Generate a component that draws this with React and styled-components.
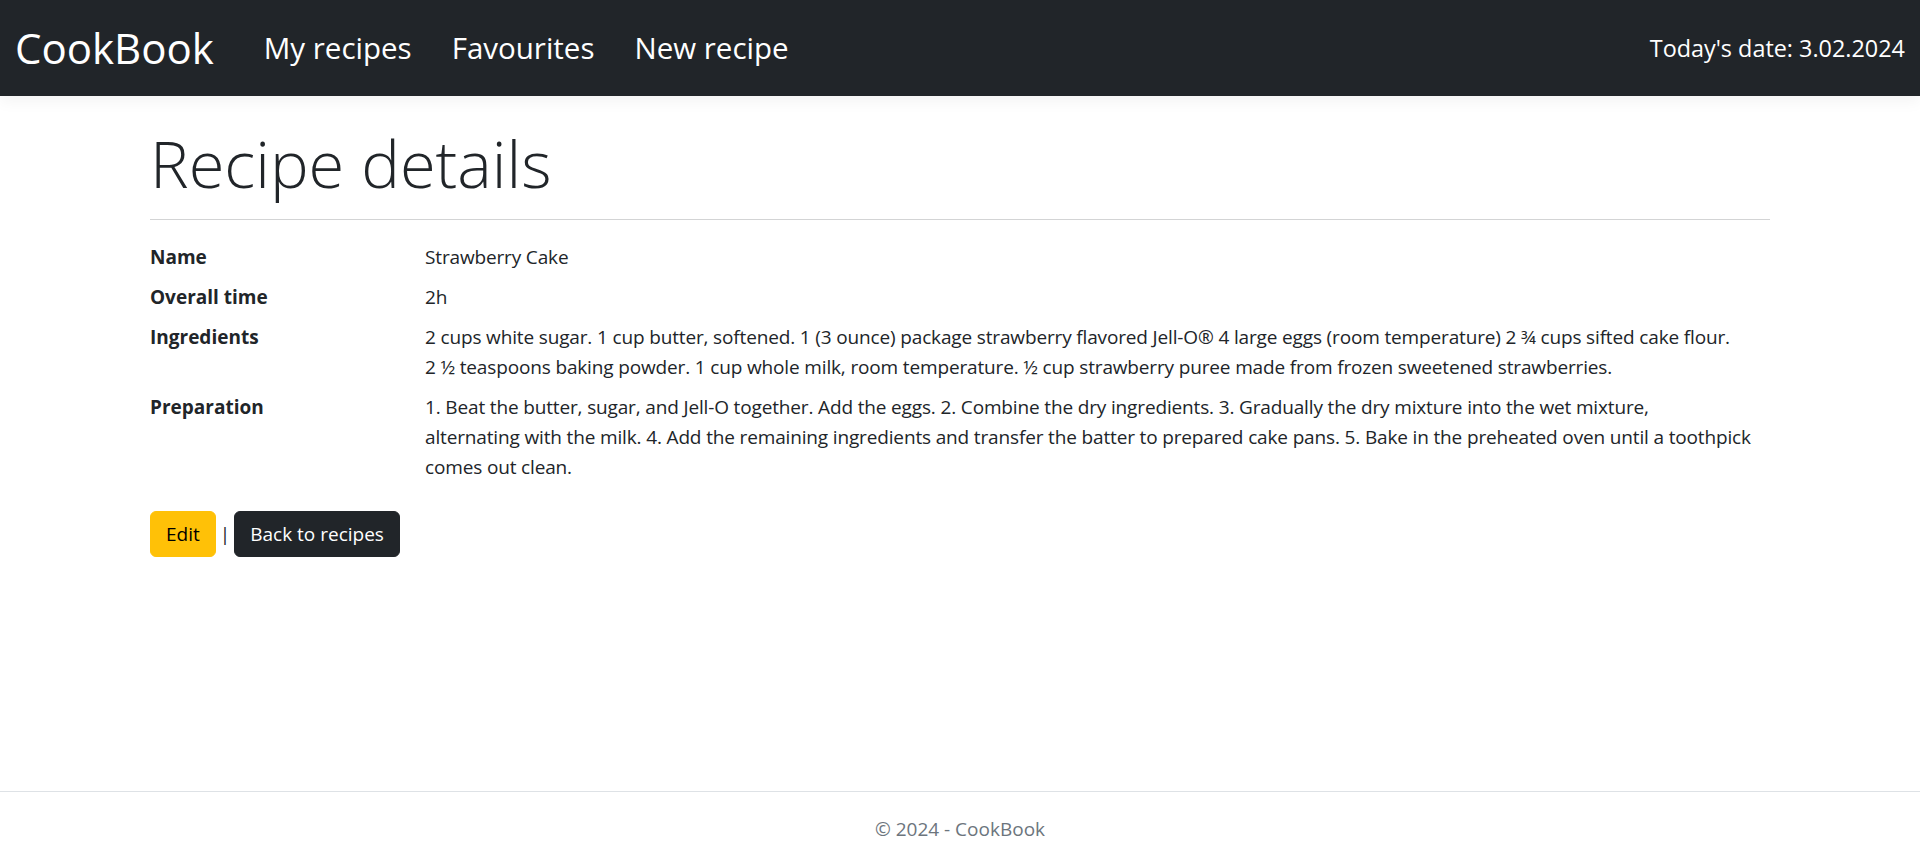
import styled, { createGlobalStyle } from "styled-components";

const GlobalStyle = createGlobalStyle`
    html, body {
        margin: 0;
        padding: 0;
    }
    body {
        font-family: "Segoe UI", "Open Sans", "Noto Sans", sans-serif;
        font-size: 19px;
        line-height: 30px;
        color: #212529;
        background: #fff;
    }
    * {
        box-sizing: border-box;
    }
`;

const Page = styled.div`
    min-height: 100vh;
    display: flex;
    flex-direction: column;
`;

/* navbar */

const Navbar = styled.header`
    height: 96px;
    flex-shrink: 0;
    background: #212529;
    display: flex;
    align-items: center;
    justify-content: space-between;
    padding: 0 15px;
    box-shadow: 0 5px 15px rgba(0, 0, 0, 0.05);
`;

const NavLeft = styled.nav`
    display: flex;
    align-items: center;
    gap: 40px;
`;

const Brand = styled.a`
    color: #fff;
    font-size: 42px;
    line-height: 1.2;
    text-decoration: none;
    margin-right: 10px;
`;

const NavLink = styled.a`
    color: #fff;
    font-size: 29.5px;
    line-height: 1.2;
    text-decoration: none;
`;

const Today = styled.span`
    color: #fff;
    font-size: 23.4px;
`;

/* content */

const Main = styled.main`
    flex: 1;
    width: 1650px;
    margin: 0 auto;
    padding: 25px 15px 0;
`;

const Heading = styled.h1`
    margin: 0;
    font-size: 65px;
    font-weight: 300;
    line-height: 84px;
`;

const Rule = styled.hr`
    margin: 14px 0 22px;
    border: 0;
    border-top: 1px solid #d3d4d5;
`;

const DetailList = styled.dl`
    display: grid;
    grid-template-columns: 275px 1fr;
    margin: 0 0 19px;
`;

const Term = styled.dt`
    font-weight: 700;
    margin-bottom: 10px;
`;

const Desc = styled.dd`
    margin: 0 0 10px;
    letter-spacing: -0.15px;
    white-space: pre-line;
`;

const Actions = styled.div`
    display: flex;
    align-items: center;
    gap: 4px;
`;

const Button = styled.a`
    display: inline-block;
    padding: 7px 15px;
    border: 1px solid ${p => p.$bg};
    border-radius: 6px;
    background: ${p => p.$bg};
    color: ${p => p.$color};
    text-decoration: none;
    line-height: 30px;
`;

const Divider = styled.span`
    color: #212529;
`;

/* footer */

const Footer = styled.footer`
    flex-shrink: 0;
    border-top: 1px solid #dee2e6;
    line-height: 74px;
    text-align: center;
    color: #6c757d;
`;

const details = [
    { label: "Name", value: "Strawberry Cake" },
    { label: "Overall time", value: "2h" },
    {
        label: "Ingredients",
        value: "2 cups white sugar. 1 cup butter, softened. 1 (3 ounce) package strawberry flavored Jell-O® 4 large eggs (room temperature) 2 ¾ cups sifted cake flour.\n2 ½ teaspoons baking powder. 1 cup whole milk, room temperature. ½ cup strawberry puree made from frozen sweetened strawberries."
    },
    {
        label: "Preparation",
        value: "1. Beat the butter, sugar, and Jell-O together. Add the eggs. 2. Combine the dry ingredients. 3. Gradually the dry mixture into the wet mixture,\nalternating with the milk. 4. Add the remaining ingredients and transfer the batter to prepared cake pans. 5. Bake in the preheated oven until a toothpick comes out clean."
    }
];

function App() {
    return (
        <Page>
            <GlobalStyle />
            <Navbar>
                <NavLeft>
                    <Brand href="#">CookBook</Brand>
                    <NavLink href="#">My recipes</NavLink>
                    <NavLink href="#">Favourites</NavLink>
                    <NavLink href="#">New recipe</NavLink>
                </NavLeft>
                <Today>Today's date: 3.02.2024</Today>
            </Navbar>

            <Main>
                <Heading>Recipe details</Heading>
                <Rule />
                <DetailList>
                    {details.map(item => [
                        <Term key={item.label + "-t"}>{item.label}</Term>,
                        <Desc key={item.label + "-d"}>{item.value}</Desc>
                    ])}
                </DetailList>
                <Actions>
                    <Button href="#" $bg="#ffc107" $color="#000">Edit</Button>
                    <Divider>|</Divider>
                    <Button href="#" $bg="#212529" $color="#fff">Back to recipes</Button>
                </Actions>
            </Main>

            <Footer>© 2024 - CookBook</Footer>
        </Page>
    );
}

export default App;
